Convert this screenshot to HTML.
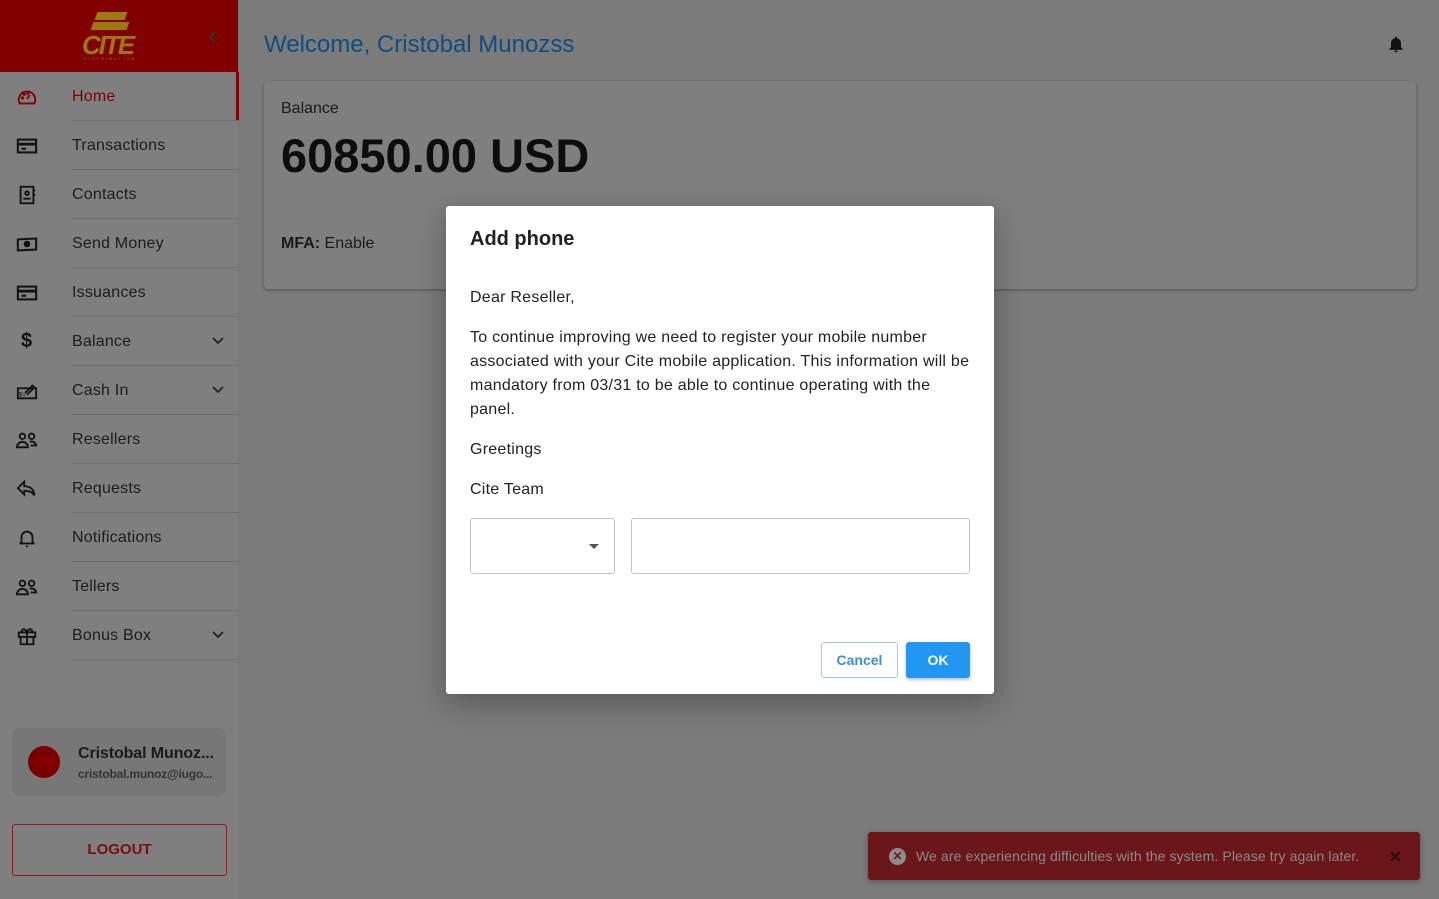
<!DOCTYPE html>
<html><head><meta charset="utf-8"><style>
*{box-sizing:border-box;margin:0;padding:0}
body{width:1439px;height:899px;overflow:hidden;background:#7b7b7b;font-family:"Liberation Sans",sans-serif;position:relative;color:#111}
.side{position:absolute;left:0;top:0;width:239px;height:899px;background:#7f7f7f;border-right:1px solid #757575}
.logo{height:72px;background:#800000;position:relative}
.logo .t{position:absolute;left:82px;top:30px;font:italic 900 26px "Liberation Sans",sans-serif;color:#9c7a10;letter-spacing:-2px}
.logo .sq{position:absolute;background:#9c7a10;transform:skewX(-20deg)}
.item{position:absolute;left:0;width:239px;height:49px}
.item .ic{position:absolute;left:16px;top:14px;width:22px;height:22px}
.item .lb{position:absolute;left:72px;top:16px;font-size:16px;color:#1c1c1c;letter-spacing:.2px}
.item .ln{position:absolute;left:72px;right:0;bottom:0;height:1px;background:#6e6e6e}
.item .ch{position:absolute;left:212px;top:20px}
.main h1{position:absolute;left:264px;top:31px;font-size:24px;font-weight:400;color:#0f4d80}
.card{position:absolute;left:264px;top:81px;width:1152px;height:208px;background:#7f7f7f;border-radius:4px;box-shadow:0 1px 3px rgba(0,0,0,.35)}
.dlg{position:absolute;left:446px;top:206px;width:548px;height:488px;background:#fff;border-radius:3px;box-shadow:0 8px 30px rgba(0,0,0,.3)}
.dlg p{position:absolute;left:24px;font-size:16px;color:#222;line-height:24px;letter-spacing:.25px}
.toast{position:absolute;left:868px;top:832px;width:552px;height:48px;background:#6b1719;border-radius:3px;box-shadow:0 2px 6px rgba(0,0,0,.3)}
</style></head><body>
<div class="side">
 <div class="logo">
  <div class="sq" style="left:96px;top:12px;width:30px;height:8px"></div>
  <div class="sq" style="left:92px;top:22px;width:36px;height:8px"></div>
  <div class="t">CITE</div>
  <div style="position:absolute;left:84px;top:56px;font-size:4px;color:#9c7a10;letter-spacing:2px">DISTRIBUTION</div>
  <svg style="position:absolute;left:208px;top:31px" width="10" height="12" viewBox="0 0 10 12" fill="none" stroke="#333" stroke-width="2"><path d="M7 1L2 6l5 5"/></svg>
 </div>
 <div style="position:absolute;left:236px;top:72px;width:3px;height:49px;background:#800000"></div>
 <div class="item" style="top:72px"><svg class="ic" viewBox="0 0 24 24" fill="none" stroke="#800000" stroke-width="2"><path d="M4 19h16a9 9 0 1 0-16 0z"/><path d="M12 14l3-4"/><circle cx="7" cy="13" r=".8"/><circle cx="9" cy="9" r=".8"/><circle cx="13" cy="8" r=".8"/></svg><span class="lb" style="color:#800000">Home</span><div class="ln"></div></div>
 <div class="item" style="top:121px"><svg class="ic" viewBox="0 0 24 24" fill="none" stroke="#111" stroke-width="2.2"><rect x="2" y="5" width="20" height="14"/><path d="M2 10h20" stroke-width="3"/><path d="M6 15h5"/></svg><span class="lb">Transactions</span><div class="ln"></div></div>
 <div class="item" style="top:170px"><svg class="ic" viewBox="0 0 24 24" fill="none" stroke="#111" stroke-width="2"><rect x="5" y="3" width="14" height="18"/><circle cx="12" cy="10" r="2"/><path d="M8 16h8M19 7h2M19 12h2"/></svg><span class="lb">Contacts</span><div class="ln"></div></div>
 <div class="item" style="top:219px"><svg class="ic" viewBox="0 0 24 24" fill="none" stroke="#111" stroke-width="2.2"><path d="M2 7l20-1v12l-20 1z"/><circle cx="12" cy="12" r="2.5" fill="#111"/></svg><span class="lb">Send Money</span><div class="ln"></div></div>
 <div class="item" style="top:268px"><svg class="ic" viewBox="0 0 24 24" fill="none" stroke="#111" stroke-width="2.2"><rect x="2" y="5" width="20" height="14"/><path d="M2 10h20" stroke-width="3"/><path d="M6 15h5"/></svg><span class="lb">Issuances</span><div class="ln"></div></div>
 <div class="item" style="top:317px"><span class="ic" style="font:bold 20px 'Liberation Sans';left:21px;top:13px">$</span><span class="lb">Balance</span><svg class="ch" width="12" height="8" viewBox="0 0 12 8" fill="none" stroke="#222" stroke-width="1.8"><path d="M1 1l5 5 5-5"/></svg><div class="ln"></div></div>
 <div class="item" style="top:366px"><svg class="ic" viewBox="0 0 24 24" fill="none" stroke="#111" stroke-width="2"><path d="M2 9h20v11H2z"/><path d="M10 14l8-8 2 2-8 8"/><text x="3" y="18" font-size="7" fill="#111" stroke="none">$=</text></svg><span class="lb">Cash In</span><svg class="ch" width="12" height="8" viewBox="0 0 12 8" fill="none" stroke="#222" stroke-width="1.8"><path d="M1 1l5 5 5-5"/></svg><div class="ln"></div></div>
 <div class="item" style="top:415px"><svg class="ic" viewBox="0 0 24 24" fill="none" stroke="#111" stroke-width="2"><circle cx="7" cy="8" r="3"/><circle cx="17" cy="8" r="3"/><path d="M1 20a6 6 0 0 1 12 0zM15 14a5 5 0 0 1 7 4h-6"/></svg><span class="lb">Resellers</span><div class="ln"></div></div>
 <div class="item" style="top:464px"><svg class="ic" viewBox="0 0 24 24" fill="none" stroke="#111" stroke-width="2"><path d="M9 4l-7 7 7 7v-4c5 0 9 1 11 5 0-6-4-10-11-10z"/></svg><span class="lb">Requests</span><div class="ln"></div></div>
 <div class="item" style="top:513px"><svg class="ic" viewBox="0 0 24 24" fill="none" stroke="#111" stroke-width="2"><path d="M6 17V11a6 6 0 0 1 12 0v6l2 1H4zM11 21h2"/></svg><span class="lb">Notifications</span><div class="ln"></div></div>
 <div class="item" style="top:562px"><svg class="ic" viewBox="0 0 24 24" fill="none" stroke="#111" stroke-width="2"><circle cx="7" cy="8" r="3"/><circle cx="17" cy="8" r="3"/><path d="M1 20a6 6 0 0 1 12 0zM15 14a5 5 0 0 1 7 4h-6"/></svg><span class="lb">Tellers</span><div class="ln"></div></div>
 <div class="item" style="top:611px"><svg class="ic" viewBox="0 0 24 24" fill="none" stroke="#111" stroke-width="2"><rect x="3" y="8" width="18" height="5"/><path d="M5 13v8h14v-8M12 8v13M12 8c-2-5-7-4-5 0M12 8c2-5 7-4 5 0"/></svg><span class="lb">Bonus Box</span><svg class="ch" width="12" height="8" viewBox="0 0 12 8" fill="none" stroke="#222" stroke-width="1.8"><path d="M1 1l5 5 5-5"/></svg><div class="ln"></div></div>
 <div style="position:absolute;left:12px;top:728px;width:214px;height:68px;background:#777;border-radius:8px">
  <div style="position:absolute;left:16px;top:18px;width:32px;height:32px;border-radius:50%;background:#7a0000;color:#900;font-size:13px;line-height:32px;text-align:center">CM</div>
  <div style="position:absolute;left:66px;top:17px;font-size:16px;font-weight:bold;color:#1a1a1a;letter-spacing:-.1px">Cristobal Munoz...</div>
  <div style="position:absolute;left:66px;top:39px;font-size:12px;font-weight:bold;color:#333;letter-spacing:-.2px">cristobal.munoz@iugo...</div>
 </div>
 <div style="position:absolute;left:12px;top:824px;width:215px;height:52px;border:1px solid #8a2020;border-radius:3px;text-align:center;line-height:50px;font-weight:bold;font-size:15px;color:#7a0d0d">LOGOUT</div>
</div>
<div class="main">
 <h1>Welcome, Cristobal Munozss</h1>
 <svg style="position:absolute;left:1386px;top:33px" width="20" height="22" viewBox="0 0 24 24" fill="#111"><path d="M12 22a2 2 0 0 0 2-2h-4a2 2 0 0 0 2 2zm6-6v-5c0-3-2-5.5-5-6V4a1 1 0 0 0-2 0v1c-3 .5-5 3-5 6v5l-2 2v1h16v-1z"/></svg>
 <div class="card">
  <div style="position:absolute;left:17px;top:19px;font-size:16px;color:#1a1a1a">Balance</div>
  <div style="position:absolute;left:17px;top:47px;font-size:47px;font-weight:bold;color:#0d0d0d;letter-spacing:0px">60850.00 USD</div>
  <div style="position:absolute;left:17px;top:154px;font-size:16px;color:#1a1a1a"><b>MFA:</b> Enable</div>
 </div>
</div>
<div class="dlg">
 <div style="position:absolute;left:24px;top:22px;font-size:20px;font-weight:bold;color:#222">Add phone</div>
 <p style="top:80px">Dear Reseller,</p>
 <p style="top:120px;width:505px">To continue improving we need to register your mobile number associated with your Cite mobile application. This information will be mandatory from 03/31 to be able to continue operating with the panel.</p>
 <p style="top:232px">Greetings</p>
 <p style="top:272px">Cite Team</p>
 <div style="position:absolute;left:24px;top:312px;width:145px;height:56px;border:1px solid #c4c4c4;border-radius:3px"><div style="position:absolute;left:118px;top:25px;border-left:5px solid transparent;border-right:5px solid transparent;border-top:5px solid #555"></div></div>
 <div style="position:absolute;left:185px;top:312px;width:339px;height:56px;border:1px solid #c4c4c4;border-radius:3px"></div>
 <div style="position:absolute;left:375px;top:436px;width:77px;height:36px;border:1px solid #9ccbe9;border-radius:3px;text-align:center;line-height:34px;font-size:14px;font-weight:bold;color:#3b8ed0">Cancel</div>
 <div style="position:absolute;left:460px;top:436px;width:64px;height:36px;background:#2196f3;border-radius:3px;text-align:center;line-height:36px;font-size:14px;font-weight:bold;color:#fff;box-shadow:0 2px 3px rgba(0,0,0,.25)">OK</div>
</div>
<div class="toast">
 <div style="position:absolute;left:21px;top:16px;width:17px;height:17px;border-radius:50%;background:#8d8d8d;color:#6b1719;font-size:12px;font-weight:bold;text-align:center;line-height:17px">✕</div>
 <div style="position:absolute;left:48px;top:16px;font-size:14px;color:#8a8a8a;letter-spacing:.1px">We are experiencing difficulties with the system. Please try again later.</div>
 <svg style="position:absolute;left:522px;top:19px" width="11" height="11" viewBox="0 0 11 11" stroke="#2a0a0a" stroke-width="2"><path d="M1 1l9 9M10 1l-9 9"/></svg>
</div>
</body></html>
